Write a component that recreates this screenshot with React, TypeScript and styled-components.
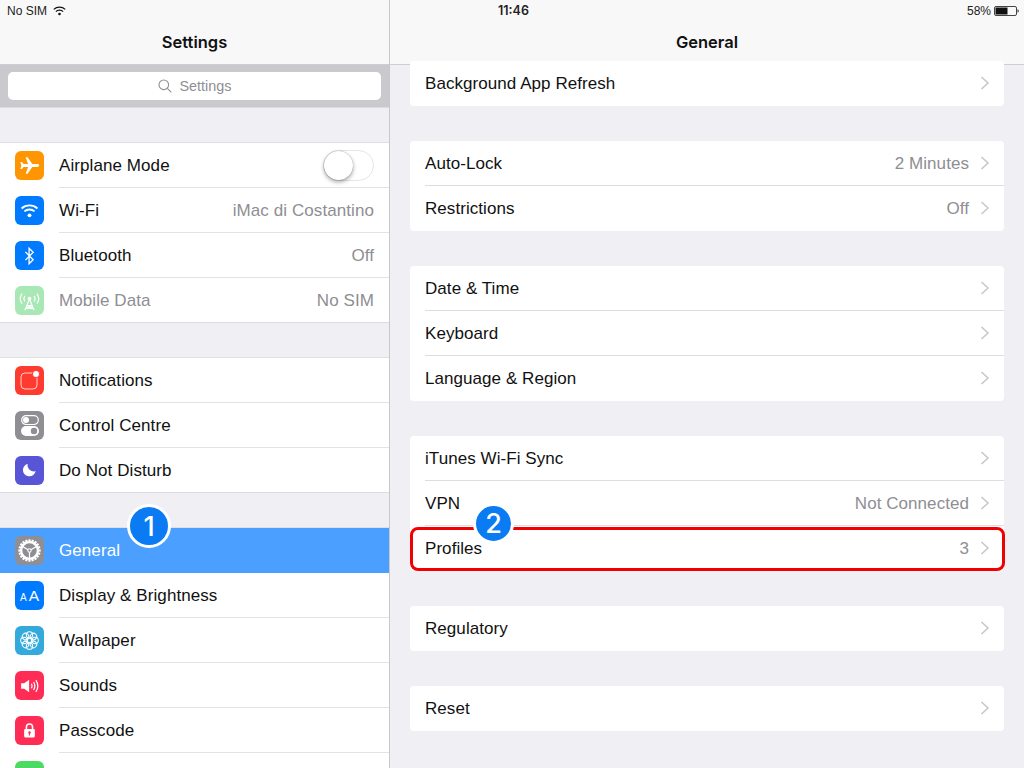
import React from "react";
import styled, { createGlobalStyle } from "styled-components";

const Global = createGlobalStyle`
  html, body { margin: 0; padding: 0; background: #efeff4; }
  body { font-family: "Liberation Sans", Arial, sans-serif; color: #111; overflow: hidden; }
  * { box-sizing: border-box; }
`;

const Page = styled.div`
  position: relative;
  width: 1024px;
  height: 768px;
  display: grid;
  grid-template-columns: 390px 634px;
  overflow: hidden;
  background: #efeff4;
`;
const StatusBar = styled.div`
  position: absolute;
  top: 0;
  left: 0;
  width: 100%;
  height: 21px;
  padding: 0 5px 0 7px;
  display: grid;
  grid-template-columns: 1fr auto 1fr;
  align-items: center;
  font-size: 12px;
  color: #222;
  z-index: 5;
`;
const StatusLeft = styled.div`
  display: flex;
  align-items: center;
  gap: 6px;
`;
const StatusTime = styled.div`
  font-family: Inter, "Liberation Sans", sans-serif;
  font-weight: 600;
  font-size: 12.5px;
  margin-left: 1px;
`;
const StatusRight = styled.div`
  display: flex;
  justify-content: flex-end;
  align-items: center;
  gap: 3px;
`;
const Panel = styled.section<{ $side?: boolean }>`
  height: 768px;
  overflow: hidden;
  display: flex;
  flex-direction: column;
  border-right: ${(p) => (p.$side ? "1px solid #c8c8cc" : "none")};
`;
const NavBar = styled.header`
  flex: none;
  height: 65px;
  padding-top: 20px;
  background: #f8f8f9;
  border-bottom: 1px solid #cfcfd3;
  display: flex;
  align-items: center;
  justify-content: center;
  font-family: Inter, "Liberation Sans", sans-serif;
  font-size: 16.5px;
  font-weight: 600;
  color: #111;
`;
const SearchBand = styled.div`
  flex: none;
  height: 43px;
  padding: 7px 8px;
  background: #c9c9ce;
  border-bottom: 1px solid #dcdce0;
`;
const SearchField = styled.div`
  height: 28px;
  background: #fff;
  border-radius: 5px;
  display: flex;
  align-items: center;
  justify-content: center;
  gap: 8px;
  color: #8e8e93;
  font-size: 14.4px;
`;
const SideList = styled.div`
  padding-top: 35px;
  display: flex;
  flex-direction: column;
  gap: 35px;
`;
const SideGroup = styled.div`
  background: #fff;
  box-shadow: 0 -1px 0 #dfdfe3;
`;
const SideRow = styled.div<{ $active?: boolean; $muted?: boolean }>`
  position: relative;
  height: 45px;
  padding-right: 15px;
  display: flex;
  align-items: center;
  font-size: 17px;
  letter-spacing: 0.08px;
  background: ${(p) => (p.$active ? "#4ba0ff" : "#fff")};
  color: ${(p) => (p.$active ? "#fff" : p.$muted ? "#8e8e93" : "#111")};
  &::after {
    content: "";
    display: ${(p) => (p.$active ? "none" : "block")};
    position: absolute;
    left: 59px;
    right: 0;
    bottom: 0;
    height: 1px;
    background: #e3e3e7;
  }
  &:last-child::after {
    left: 0;
    background: #dcdce0;
  }
`;
const IconBox = styled.span<{ $bg: string }>`
  flex: none;
  width: 29px;
  height: 29px;
  margin: 0 15px;
  border-radius: 6px;
  background: ${(p) => p.$bg};
  display: flex;
  align-items: center;
  justify-content: center;
  color: #fff;
`;
const Label = styled.span`
  flex: 1;
  white-space: nowrap;
`;
const Value = styled.span`
  color: #8e8e93;
  white-space: nowrap;
`;
const Toggle = styled.span`
  position: relative;
  width: 51px;
  height: 31px;
  border-radius: 16px;
  background: #fff;
  border: 1.5px solid #e5e5ea;
`;
const Knob = styled.span`
  position: absolute;
  left: 0;
  top: -0.5px;
  width: 29px;
  height: 29px;
  border-radius: 50%;
  background: #fff;
  box-shadow: 0 2px 4px rgba(0, 0, 0, 0.35), 0 0 1px rgba(0, 0, 0, 0.4);
`;
const MainList = styled.div`
  margin-top: -4px;
  padding: 0 20px;
  display: flex;
  flex-direction: column;
  gap: 35px;
`;
const MainGroup = styled.div`
  background: #fff;
  border-radius: 4px;
`;
const MainRow = styled.div`
  position: relative;
  height: 45px;
  padding: 0 14px 0 15px;
  display: flex;
  align-items: center;
  font-size: 17px;
  letter-spacing: 0.06px;
  color: #111;
  &:not(:last-child)::after {
    content: "";
    position: absolute;
    left: 15px;
    right: 0;
    bottom: 0;
    height: 1px;
    background: #dedee2;
  }
`;
const Chevron = styled.svg`
  flex: none;
  margin-left: 11px;
  width: 10px;
  height: 16px;
`;
const Highlight = styled.span`
  position: absolute;
  left: -0.5px;
  right: -0.5px;
  top: 1px;
  bottom: 0;
  border: 3px solid #f00000;
  border-radius: 8px;
`;
const Badge = styled.span<{ $size: number; $left: number; $top: number }>`
  position: absolute;
  left: ${(p) => p.$left}px;
  top: ${(p) => p.$top}px;
  width: ${(p) => p.$size}px;
  height: ${(p) => p.$size}px;
  border-radius: 50%;
  background: #0a7bf2;
  border: 3px solid #fff;
  color: #fff;
  display: flex;
  align-items: center;
  justify-content: center;
  font-family: Inter, "Liberation Sans", sans-serif;
  font-size: 27px;
  font-weight: 500;
  letter-spacing: 0;
  z-index: 3;
`;

const Arrow = () => (
  <Chevron viewBox="0 0 10 16">
    <path d="M1.5 1 8 7 1.5 13" fill="none" stroke="#c7c7cc" strokeWidth="1.6" />
  </Chevron>
);

const AirplaneIcon = () => (
  <svg width="21" height="21" viewBox="0 0 24 24" fill="#fff">
    <path d="M23 12c0-1-1-1.6-2.2-1.6h-5.6L9.8 2.5H7.6l2.8 7.9H5.2L3.3 8H1.5l1.2 4-1.2 4h1.8l1.9-2.4h5.2l-2.8 7.9h2.2l5.4-7.9h5.6C22 13.6 23 13 23 12z" />
  </svg>
);
const WifiIcon = () => (
  <svg width="19" height="15" viewBox="0 0 21 17" fill="none" stroke="#fff" strokeWidth="2.1">
    <path d="M1.5 6.2c5-4.6 13-4.6 18 0M4.7 9.5c3.2-2.9 8.4-2.9 11.6 0" />
    <circle cx="10.5" cy="14" r="2.2" fill="#fff" stroke="none" />
  </svg>
);
const BluetoothIcon = () => (
  <svg width="11" height="18" viewBox="0 0 13 22" fill="none" stroke="#fff" strokeWidth="1.6">
    <path d="M1.5 6 11 15.5 6 20.5V1.5L11 6.5 1.5 16" />
  </svg>
);
const AntennaIcon = () => (
  <svg width="23" height="23" viewBox="0 0 25 25" fill="none" stroke="#fff" strokeWidth="1.3">
    <path d="M4.5 5c-2.6 3.4-2.6 7.6 0 11M20.5 5c2.6 3.4 2.6 7.6 0 11M7.6 7.5c-1.5 2-1.5 4 0 6M17.4 7.5c1.5 2 1.5 4 0 6" />
    <circle cx="12.5" cy="10.5" r="2" fill="#fff" stroke="none" />
    <path d="M12.5 11 7.5 23M12.5 11l5 12M9.6 18h5.8M8.5 21l8 0M9.6 18l6.9 3M15.4 18l-6.9 3" />
  </svg>
);
const NotifIcon = () => (
  <svg width="29" height="29" viewBox="0 0 29 29" fill="none" stroke="#fff" strokeWidth="0.9">
    <rect x="6" y="7" width="16" height="16" rx="4" opacity="0.85" />
    <circle cx="21" cy="8" r="3.6" fill="#fff" stroke="#ff3b30" strokeWidth="1" />
  </svg>
);
const ControlIcon = () => (
  <svg width="18" height="21" viewBox="0 0 18 21">
    <rect x="0.7" y="0.7" width="16.6" height="8.8" rx="4.4" fill="none" stroke="#fff" strokeWidth="1.2" />
    <circle cx="5" cy="5.1" r="3" fill="#fff" />
    <rect x="0" y="11" width="18" height="10" rx="5" fill="#fff" />
    <circle cx="13" cy="16" r="3.2" fill="#8e8e93" />
  </svg>
);
const MoonIcon = () => (
  <svg width="17" height="17" viewBox="0 0 21 21" fill="#fff">
    <path d="M8.2 2.2c-.9 5.6 3.4 10.4 9.9 9.2-1 3.8-4.2 6.2-7.7 6.2-4.4 0-8-3.5-8-7.8 0-3.3 2.3-6.4 5.8-7.6z" />
  </svg>
);
const GearIcon = () => {
  const teeth = Array.from({ length: 20 }, (_, i) => i * 18);
  return (
    <svg width="25" height="25" viewBox="0 0 27 27" fill="none" stroke="#fff">
      {teeth.map((a) => (
        <path key={a} d="M13.5 1.4v3.4" strokeWidth="2.4" transform={`rotate(${a} 13.5 13.5)`} />
      ))}
      <circle cx="13.5" cy="13.5" r="9" strokeWidth="2.4" />
      <circle cx="13.5" cy="13.5" r="1.8" strokeWidth="1.1" />
      <path d="M13.5 15.3V22M12 12.6 6 9.2M15 12.6l6-3.4" strokeWidth="1.3" />
    </svg>
  );
};
const TextSize = styled.span`
  display: flex;
  align-items: baseline;
  gap: 2px;
  font-size: 10px;
  line-height: 1;
  letter-spacing: 0;
  & > b {
    font-weight: 400;
    font-size: 15.5px;
  }
`;
const FlowerIcon = () => {
  const petals = Array.from({ length: 8 }, (_, i) => i * 45);
  return (
    <svg width="21" height="21" viewBox="0 0 25 25" fill="none" stroke="#fff" strokeWidth="1.2">
      {petals.map((a) => (
        <circle key={a} cx="12.5" cy="5.8" r="3.8" transform={`rotate(${a} 12.5 12.5)`} />
      ))}
      <circle cx="12.5" cy="12.5" r="2.6" />
    </svg>
  );
};
const SoundIcon = () => (
  <svg width="20" height="16" viewBox="0 0 22 18" fill="none" stroke="#fff" strokeWidth="1.4">
    <path d="M1 6h3.5L10 2v14l-5.5-4H1z" fill="#fff" stroke="none" />
    <path d="M12.5 6.5c1 1.5 1 3.5 0 5M15 4.5c1.8 2.8 1.8 6.2 0 9M17.6 2.5c2.7 4 2.7 9 0 13" />
  </svg>
);
const LockIcon = () => (
  <svg width="13" height="17" viewBox="0 0 17 21">
    <path d="M4.5 9V6a4 4 0 0 1 8 0v3" fill="none" stroke="#fff" strokeWidth="2" />
    <rect x="1.5" y="8.5" width="14" height="11" rx="1.5" fill="#fff" />
    <circle cx="8.5" cy="13" r="1.6" fill="#ff2d55" />
    <rect x="7.8" y="13" width="1.4" height="4" fill="#ff2d55" />
  </svg>
);
const SearchIcon = () => (
  <svg width="14" height="14" viewBox="0 0 14 14" fill="none" stroke="#8e8e93" strokeWidth="1.1">
    <circle cx="5.8" cy="5.8" r="4.8" />
    <path d="m9.3 9.3 4 4" />
  </svg>
);
const StatusWifi = () => (
  <svg width="13" height="10" viewBox="0 0 13 10" fill="none" stroke="#111" strokeWidth="1.3">
    <path d="M.8 3.4c3.2-3 8.2-3 11.4 0M2.9 5.6c2-1.9 5.2-1.9 7.2 0" />
    <circle cx="6.5" cy="8" r="1.3" fill="#111" stroke="none" />
  </svg>
);
const Battery = () => (
  <svg width="25" height="10" viewBox="0 0 25 10">
    <rect x=".5" y=".5" width="22" height="9" rx="1.5" fill="none" stroke="#444" strokeWidth="1" />
    <rect x="1.5" y="1.5" width="12" height="7" fill="#111" />
    <path d="M23.5 3.3c.8.2 1.2.8 1.2 1.7s-.4 1.5-1.2 1.7z" fill="#333" />
  </svg>
);

type SideItem = {
  label: string;
  bg: string;
  icon: React.ReactNode;
  value?: string;
  toggle?: boolean;
  muted?: boolean;
  active?: boolean;
};

const sideGroups: SideItem[][] = [
  [
    { label: "Airplane Mode", bg: "#ff9500", icon: <AirplaneIcon />, toggle: true },
    { label: "Wi-Fi", bg: "#007aff", icon: <WifiIcon />, value: "iMac di Costantino" },
    { label: "Bluetooth", bg: "#007aff", icon: <BluetoothIcon />, value: "Off" },
    { label: "Mobile Data", bg: "#a8e8b4", icon: <AntennaIcon />, value: "No SIM", muted: true },
  ],
  [
    { label: "Notifications", bg: "#ff3b30", icon: <NotifIcon /> },
    { label: "Control Centre", bg: "#8e8e93", icon: <ControlIcon /> },
    { label: "Do Not Disturb", bg: "#5856d6", icon: <MoonIcon /> },
  ],
  [
    { label: "General", bg: "#8e8e93", icon: <GearIcon />, active: true },
    {
      label: "Display & Brightness",
      bg: "#007aff",
      icon: (
        <TextSize>
          A<b>A</b>
        </TextSize>
      ),
    },
    { label: "Wallpaper", bg: "#34aadc", icon: <FlowerIcon /> },
    { label: "Sounds", bg: "#ff2d55", icon: <SoundIcon /> },
    { label: "Passcode", bg: "#ff2d55", icon: <LockIcon /> },
    { label: "", bg: "#4cd964", icon: null },
  ],
];

type MainItem = { label: string; value?: string; mark?: boolean };
const mainGroups: MainItem[][] = [
  [{ label: "Background App Refresh" }],
  [
    { label: "Auto-Lock", value: "2 Minutes" },
    { label: "Restrictions", value: "Off" },
  ],
  [{ label: "Date & Time" }, { label: "Keyboard" }, { label: "Language & Region" }],
  [
    { label: "iTunes Wi-Fi Sync" },
    { label: "VPN", value: "Not Connected" },
    { label: "Profiles", value: "3", mark: true },
  ],
  [{ label: "Regulatory" }],
  [{ label: "Reset" }],
];

export default function App() {
  return (
    <Page>
      <Global />
      <StatusBar>
        <StatusLeft>
          No SIM <StatusWifi />
        </StatusLeft>
        <StatusTime>11:46</StatusTime>
        <StatusRight>
          58% <Battery />
        </StatusRight>
      </StatusBar>
      <Panel $side>
        <NavBar>Settings</NavBar>
        <SearchBand>
          <SearchField>
            <SearchIcon />
            Settings
          </SearchField>
        </SearchBand>
        <SideList>
          {sideGroups.map((group, i) => (
            <SideGroup key={i}>
              {group.map((item) => (
                <SideRow key={item.label} $active={item.active} $muted={item.muted}>
                  <IconBox $bg={item.bg}>{item.icon}</IconBox>
                  <Label>{item.label}</Label>
                  {item.value && <Value>{item.value}</Value>}
                  {item.toggle && (
                    <Toggle>
                      <Knob />
                    </Toggle>
                  )}
                  {item.active && (
                    <Badge $size={44} $left={127} $top={-24}>
                      1
                    </Badge>
                  )}
                </SideRow>
              ))}
            </SideGroup>
          ))}
        </SideList>
      </Panel>
      <Panel>
        <NavBar>General</NavBar>
        <MainList>
          {mainGroups.map((group, i) => (
            <MainGroup key={i}>
              {group.map((item) => (
                <MainRow key={item.label}>
                  <Label>{item.label}</Label>
                  {item.value && <Value>{item.value}</Value>}
                  <Arrow />
                  {item.mark && (
                    <>
                      <Highlight />
                      <Badge $size={41} $left={63} $top={-23}>
                        2
                      </Badge>
                    </>
                  )}
                </MainRow>
              ))}
            </MainGroup>
          ))}
        </MainList>
      </Panel>
    </Page>
  );
}
